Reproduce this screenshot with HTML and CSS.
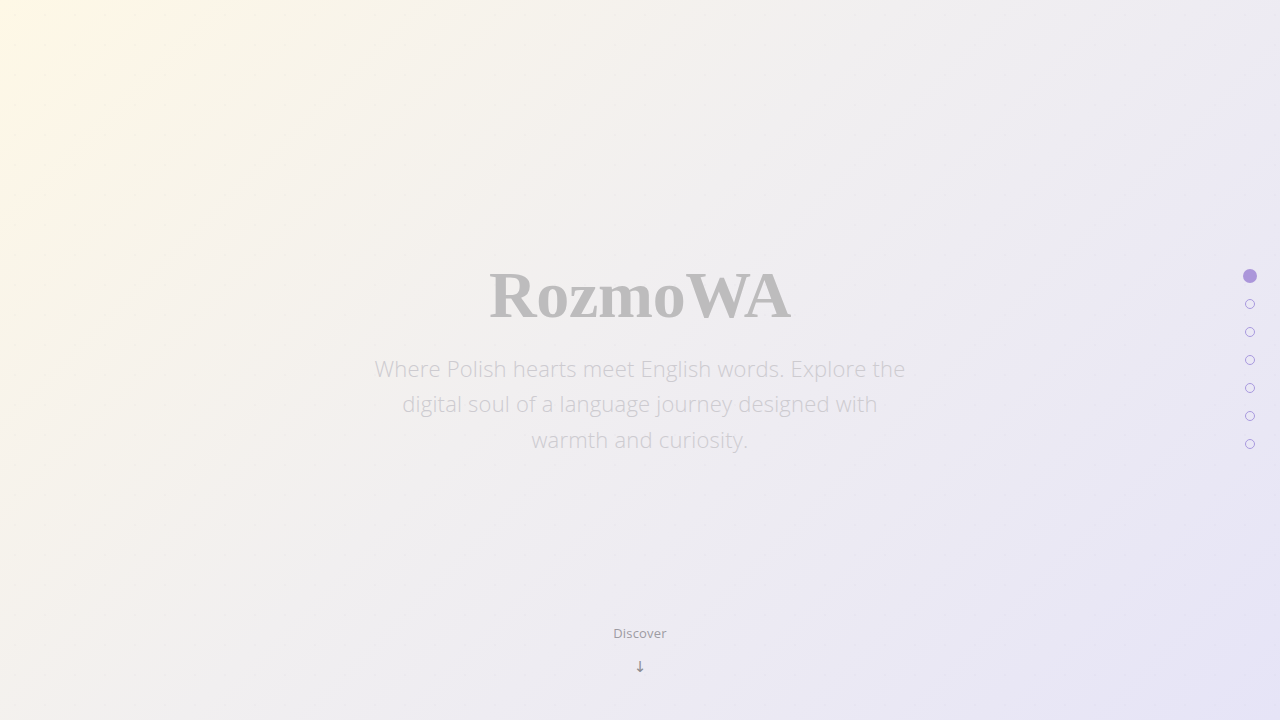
FILE: index.html
```html
<!DOCTYPE html>
<html lang="en">
<head>
<meta charset="utf-8">
<title>RozmoWA</title>
<link rel="stylesheet" href="styles.css">
</head>
<body>
<main class="hero">
  <div class="hero-content">
    <h1 class="title">RozmoWA</h1>
    <p class="subtitle">Where Polish hearts meet English words. Explore the digital soul of a language journey designed with warmth and curiosity.</p>
  </div>
  <div class="discover">
    <span class="discover-label">Discover</span>
    <span class="discover-arrow">↓</span>
  </div>
</main>
<nav class="dots">
  <span class="dot active"></span>
  <span class="dot"></span>
  <span class="dot"></span>
  <span class="dot"></span>
  <span class="dot"></span>
  <span class="dot"></span>
  <span class="dot"></span>
</nav>
</body>
</html>
```
FILE: styles.css
```css
html, body {
  margin: 0;
  padding: 0;
  height: 100%;
}
body {
  font-family: "Open Sans", "Noto Sans", sans-serif;
  background: linear-gradient(135deg, #fef8e6 0%, #f1eff0 45%, #e6e4f7 100%);
  overflow: hidden;
  position: relative;
}
body::before {
  content: "";
  position: absolute;
  inset: 0;
  background-image: radial-gradient(circle at 15px 15px, rgba(180, 170, 190, 0.06) 1px, transparent 1.6px);
  background-size: 30px 30px;
  pointer-events: none;
}
.hero {
  position: relative;
  height: 720px;
  display: flex;
  flex-direction: column;
  align-items: center;
  justify-content: center;
}
.hero-content {
  display: flex;
  flex-direction: column;
  align-items: center;
  text-align: center;
  margin-top: -8px;
}
.title {
  margin: 0;
  font-family: "Liberation Serif", "Times New Roman", serif;
  font-weight: 700;
  font-size: 66px;
  line-height: 80px;
  color: #bdbcbd;
  letter-spacing: -0.3px;
}
.subtitle {
  margin: 16px 0 0;
  width: 545px;
  font-family: "Open Sans", sans-serif;
  font-weight: 300;
  font-size: 22px;
  line-height: 35.5px;
  letter-spacing: 0.2px;
  color: #cdcbd0;
}
.discover {
  position: absolute;
  left: 50%;
  bottom: 45px;
  transform: translateX(-50%);
  display: flex;
  flex-direction: column;
  align-items: center;
  gap: 17px;
}
.discover-label {
  font-size: 13px;
  color: #9d9ba2;
  letter-spacing: 0.2px;
}
.discover-arrow {
  font-family: "DejaVu Sans", sans-serif;
  font-size: 15px;
  line-height: 16px;
  color: #8c8b90;
}
.dots {
  position: fixed;
  right: 23px;
  top: 269px;
  display: flex;
  flex-direction: column;
  align-items: center;
  gap: 18px;
}
.dot {
  width: 8px;
  height: 8px;
  border: 1px solid #a899de;
  border-radius: 50%;
  box-sizing: content-box;
}
.dot.active {
  width: 14px;
  height: 14px;
  border: none;
  background: #ab96da;
  margin-bottom: -2px;
}
```
